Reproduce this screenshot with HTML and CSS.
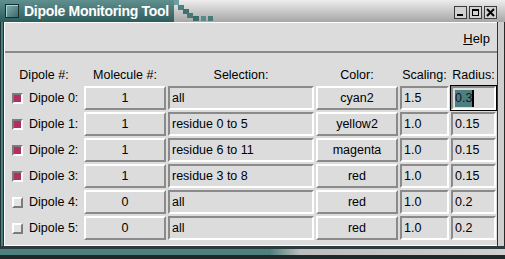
FILE: index.html
```html
<!DOCTYPE html>
<html lang="en">

<head>
    <meta charset="UTF-8">
    <title>Dipole Monitoring Tool</title>
    <link rel="stylesheet" href="styles.css">
</head>

<body>

    <div class="window">
        <div class="titlebar">
            <div class="title-teal">
                <span class="app-icon"></span>
                <span class="title">Dipole Monitoring Tool</span>
            </div>
            <svg class="stairs" width="40" height="22" viewBox="0 0 40 22">
                <rect x="0" y="0" width="5" height="5" fill="#6f9c9c" />
                <rect x="4" y="5" width="6" height="5" fill="#4f8080" />
                <rect x="9" y="9" width="6" height="5" fill="#3f7070" />
                <rect x="13" y="13" width="6" height="5" fill="#467777" />
                <rect x="19" y="16" width="6" height="5" fill="#3b6b6b" />
                <rect x="27" y="16" width="5" height="5" fill="#5a8a8a" />
                <rect x="34" y="16" width="5" height="5" fill="#4a7a7a" />
            </svg>
            <div class="title-fill"></div>
            <div class="controls">
                <svg class="ctl" width="13" height="13" viewBox="0 0 13 13">
                    <rect x="0.5" y="0.5" width="12" height="12" fill="#d2d2d2" stroke="#3c3c3c" />
                    <rect x="3" y="8" width="6" height="2" fill="#000" />
                </svg>
                <svg class="ctl" width="13" height="13" viewBox="0 0 13 13">
                    <rect x="0.5" y="0.5" width="12" height="12" fill="#d2d2d2" stroke="#3c3c3c" />
                    <rect x="3.5" y="3.5" width="6" height="6" fill="#d2d2d2" stroke="#000" />
                    <rect x="3" y="3" width="7" height="2" fill="#000" />
                </svg>
                <svg class="ctl" width="13" height="13" viewBox="0 0 13 13">
                    <rect x="0.5" y="0.5" width="12" height="12" fill="#d2d2d2" stroke="#3c3c3c" />
                    <path d="M3 3 L10 10 M10 3 L3 10" stroke="#000" stroke-width="2" />
                </svg>
            </div>
        </div>

        <div class="client">
            <div class="menubar">
                <span class="menu"><u>H</u>elp</span>
            </div>

            <div class="grid">
                <div class="head">Dipole #:</div>
                <div class="head">Molecule #:</div>
                <div class="head">Selection:</div>
                <div class="head">Color:</div>
                <div class="head">Scaling:</div>
                <div class="head">Radius:</div>

                <!-- Dipole 0 -->
                <div class="check"><span class="box on"></span>Dipole 0:</div>
                <div class="cell"><div class="btn">1</div></div>
                <div class="cell"><div class="entry">all</div></div>
                <div class="cell"><div class="btn">cyan2</div></div>
                <div class="cell"><div class="entry">1.5</div></div>
                <div class="cell focus"><div class="entry"><span class="sel">0.3</span><span class="caret"></span></div></div>

                <!-- Dipole 1 -->
                <div class="check"><span class="box on"></span>Dipole 1:</div>
                <div class="cell"><div class="btn">1</div></div>
                <div class="cell"><div class="entry">residue 0 to 5</div></div>
                <div class="cell"><div class="btn">yellow2</div></div>
                <div class="cell"><div class="entry">1.0</div></div>
                <div class="cell"><div class="entry">0.15</div></div>

                <!-- Dipole 2 -->
                <div class="check"><span class="box on"></span>Dipole 2:</div>
                <div class="cell"><div class="btn">1</div></div>
                <div class="cell"><div class="entry">residue 6 to 11</div></div>
                <div class="cell"><div class="btn">magenta</div></div>
                <div class="cell"><div class="entry">1.0</div></div>
                <div class="cell"><div class="entry">0.15</div></div>

                <!-- Dipole 3 -->
                <div class="check"><span class="box on"></span>Dipole 3:</div>
                <div class="cell"><div class="btn">1</div></div>
                <div class="cell"><div class="entry">residue 3 to 8</div></div>
                <div class="cell"><div class="btn">red</div></div>
                <div class="cell"><div class="entry">1.0</div></div>
                <div class="cell"><div class="entry">0.15</div></div>

                <!-- Dipole 4 -->
                <div class="check"><span class="box off"></span>Dipole 4:</div>
                <div class="cell"><div class="btn">0</div></div>
                <div class="cell"><div class="entry">all</div></div>
                <div class="cell"><div class="btn">red</div></div>
                <div class="cell"><div class="entry">1.0</div></div>
                <div class="cell"><div class="entry">0.2</div></div>

                <!-- Dipole 5 -->
                <div class="check"><span class="box off"></span>Dipole 5:</div>
                <div class="cell"><div class="btn">0</div></div>
                <div class="cell"><div class="entry">all</div></div>
                <div class="cell"><div class="btn">red</div></div>
                <div class="cell"><div class="entry">1.0</div></div>
                <div class="cell"><div class="entry">0.2</div></div>
            </div>
        </div>

        <div class="frame-bottom"></div>
    </div>

</body>

</html>
```

FILE: styles.css
```css
body {
    margin: 0;
    background-color: #dcdcdc;
    font-family: "Liberation Sans", Arial, sans-serif;
}

.window {
    width: 505px;
    height: 259px;
    box-sizing: border-box;
    display: flex;
    flex-direction: column;
    border-left: 1px solid #1d3535;
    border-right: 1px solid #2a2a2a;
    background: linear-gradient(to right, #4e8080 0, #4e8080 260px, #bdbdbd 320px, #cfcfcf 100%);
}

/* title bar */
.titlebar {
    height: 22px;
    flex: none;
    margin: 0 -1px;
    display: flex;
    align-items: center;
    background: linear-gradient(#ededed, #a6a6a6);
}

.title-teal {
    width: 174px;
    height: 22px;
    display: flex;
    align-items: center;
    background: linear-gradient(#5f8f8f, #2e5c5c);
}

.app-icon {
    width: 14px;
    height: 14px;
    margin-left: 5px;
    box-sizing: border-box;
    border: 1px solid #163030;
    background: linear-gradient(135deg, #80b0b0, #3a6a6a);
    box-shadow: inset 1px 1px 0 #a8cfcf;
}

.title {
    margin-left: 5px;
    color: white;
    font-weight: bold;
    font-size: 14px;
    letter-spacing: -0.3px;
}

.stairs {
    flex: none;
}

.title-fill {
    flex: 1;
}

.controls {
    display: flex;
    gap: 2px;
    margin-right: 8px;
    margin-top: 3px;
}

/* client area */
.client {
    flex: 1;
    margin: 0 6px 0 2px;
    padding-left: 1px;
    border-left: 1px solid #1d3535;
    border-right: 1px solid #333;
    background-color: #dcdcdc;
    box-shadow: inset 1px 1px 0 #fff, inset 0 -1px 0 #fff;
}

.menubar {
    height: 25px;
    margin-top: 1px;
    border-bottom: 2px solid #8a8a8a;
    display: flex;
    justify-content: flex-end;
    align-items: center;
    padding: 3px 7px 0 0;
    font-size: 13px;
}

.grid {
    display: grid;
    grid-template-columns: 78px 84px 148px 84px 51px 47px;
    grid-template-rows: 32px repeat(6, 26px);
    font-size: 12.5px;
}

.head {
    align-self: end;
    text-align: center;
    line-height: 16px;
    padding-bottom: 2px;
    white-space: nowrap;
}

.check {
    display: flex;
    align-items: center;
    gap: 6px;
    padding-left: 7px;
    white-space: nowrap;
}

.box {
    width: 11px;
    height: 11px;
    box-sizing: border-box;
    border: 2px solid;
}

.box.on {
    border-color: #7c7c7c #fff #fff #7c7c7c;
    background-color: #b03060;
}

.box.off {
    border-color: #fff #7c7c7c #7c7c7c #fff;
    background-color: #e4e4e4;
}

.cell {
    padding: 1px;
}

.cell.focus {
    padding: 0;
    border: 1px solid #000;
}

.btn,
.entry {
    height: 24px;
    box-sizing: border-box;
    border: 2px solid;
    display: flex;
    align-items: center;
    white-space: nowrap;
    overflow: hidden;
}

.btn {
    border-color: #fff #8a8a8a #8a8a8a #fff;
    justify-content: center;
}

.entry {
    border-color: #8a8a8a #fff #fff #8a8a8a;
    padding-left: 2px;
}

.sel {
    background-color: #4e7f7f;
    line-height: 17px;
    color: #101828;
}

.caret {
    width: 2px;
    height: 17px;
    background-color: #000;
}

.frame-bottom {
    height: 13px;
    flex: none;
    margin: 0 -1px;
    box-sizing: border-box;
    border-top: 3px solid #2b3b3b;
    border-bottom: 4px solid #1e2828;
    background: linear-gradient(to right, #4e8080 0, #4e8080 270px, #bdbdbd 300px, #d0d0d0 100%);
}
```
